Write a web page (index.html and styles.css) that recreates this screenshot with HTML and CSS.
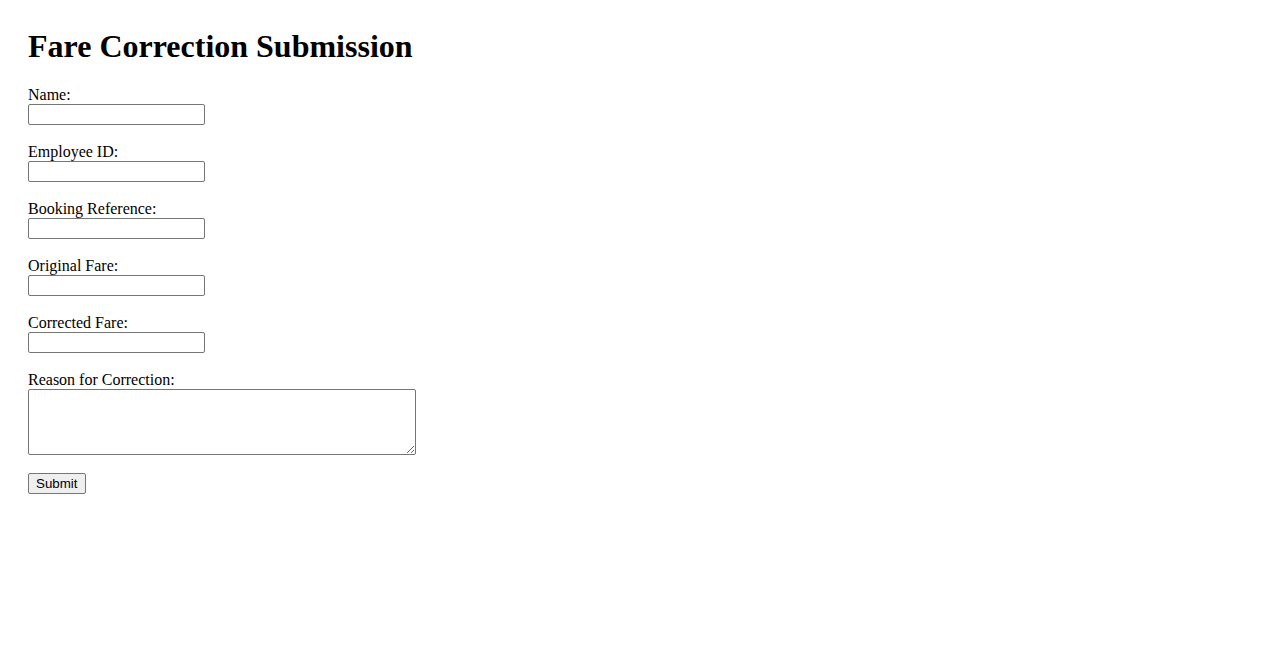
FILE: index.html
```html
<!DOCTYPE html>
<html lang="en">
<head>
<meta charset="utf-8">
<title>Fare Correction Submission</title>
<link rel="stylesheet" href="styles.css">
</head>
<body>
<div class="page">
<h1 class="title">Fare Correction Submission</h1>
<form class="form">
<label class="label" for="name">Name:</label><br>
<input class="field" type="text" id="name"><br><br>
<label class="label" for="emp">Employee ID:</label><br>
<input class="field" type="text" id="emp"><br><br>
<label class="label" for="ref">Booking Reference:</label><br>
<input class="field" type="text" id="ref"><br><br>
<label class="label" for="orig">Original Fare:</label><br>
<input class="field" type="text" id="orig"><br><br>
<label class="label" for="corr">Corrected Fare:</label><br>
<input class="field" type="text" id="corr"><br><br>
<label class="label" for="reason">Reason for Correction:</label><br>
<textarea class="area" id="reason" rows="4"></textarea><br><br>
<button class="btn" type="submit">Submit</button>
</form>
</div>
</body>
</html>
```
FILE: styles.css
```css
body {
  margin: 8px;
  font-family: "Liberation Serif", "Times New Roman", serif;
  font-size: 16px;
  color: #000;
  background: #fff;
}
.page {
  padding: 20px;
}
.title {
  font-size: 32px;
  font-weight: bold;
  margin: 0 0 21px 0;
}
.form {
  margin: 0;
}
.field {
  font-family: "Liberation Sans", Arial, sans-serif;
  font-size: 13.333px;
  width: 177px;
  height: 21px;
  box-sizing: border-box;
  border: 1px solid #767676;
  border-radius: 2px;
  padding: 1px 2px;
  margin: 0;
}
.area {
  font-family: "Liberation Mono", "Courier New", monospace;
  font-size: 13.333px;
  width: 388px;
  height: 66px;
  box-sizing: border-box;
  border: 1px solid #767676;
  border-radius: 2px;
  padding: 2px;
  margin: 0;
  vertical-align: bottom;
}
.btn {
  font-family: "Liberation Sans", Arial, sans-serif;
  font-size: 13.333px;
  width: 58px;
  height: 21px;
  box-sizing: border-box;
  padding: 1px 8px 1px 7px;
  border: 1px solid #767676;
  border-radius: 2px;
  background: #efefef;
  color: #000;
  margin: 0;
}
```
